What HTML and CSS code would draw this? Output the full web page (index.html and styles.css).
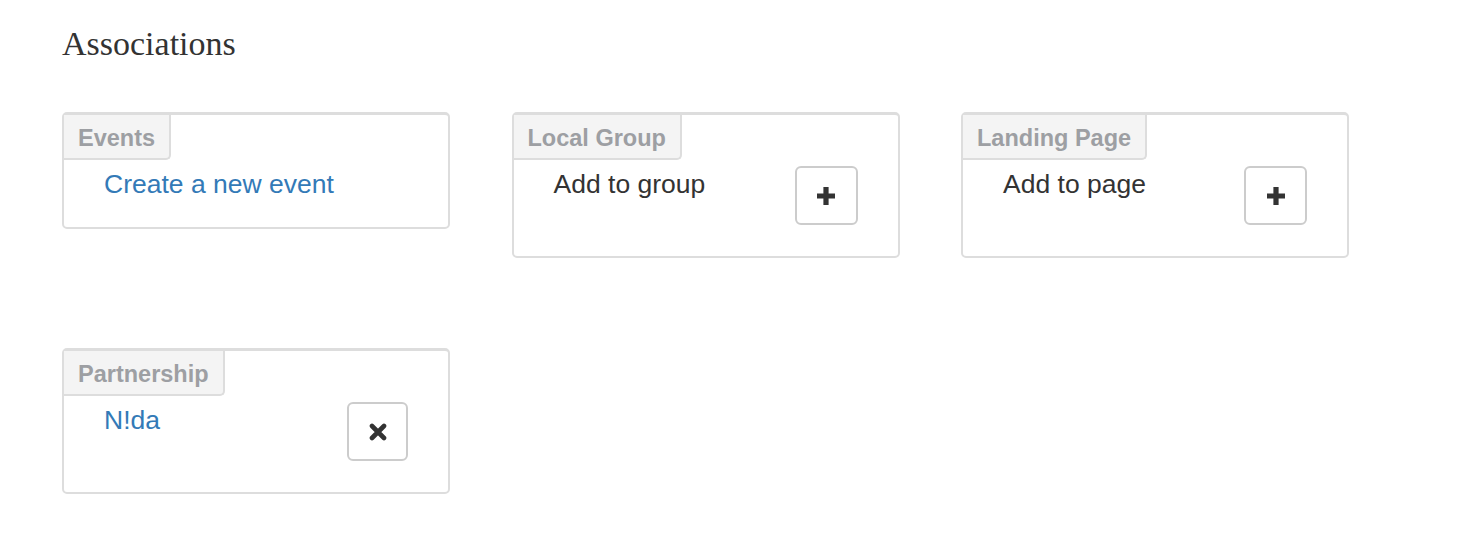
FILE: index.html
```html
<!DOCTYPE html>
<html>
<head>
<meta charset="utf-8">
<link rel="stylesheet" href="styles.css">
</head>
<body>
<div class="page">
  <h2 class="title">Associations</h2>
  <div class="grid">
    <div class="card">
      <div class="tab">Events</div>
      <div class="body">
        <a class="link" href="#">Create a new event</a>
      </div>
    </div>
    <div class="card">
      <div class="tab">Local Group</div>
      <div class="body">
        <span class="text">Add to group</span>
        <button class="btn" type="button" aria-label="Add">
          <svg width="20" height="20" viewBox="0 0 20 20"><path d="M10 1v18M1 10h18" stroke="#333" stroke-width="5.2" fill="none"/></svg>
        </button>
      </div>
    </div>
    <div class="card">
      <div class="tab">Landing Page</div>
      <div class="body">
        <span class="text">Add to page</span>
        <button class="btn" type="button" aria-label="Add">
          <svg width="20" height="20" viewBox="0 0 20 20"><path d="M10 1v18M1 10h18" stroke="#333" stroke-width="5.2" fill="none"/></svg>
        </button>
      </div>
    </div>
    <div class="card">
      <div class="tab">Partnership</div>
      <div class="body">
        <a class="link" href="#">N!da</a>
        <button class="btn btn-x" type="button" aria-label="Remove">
          <svg width="18" height="18" viewBox="0 0 18 18"><path d="M3 3l12 12M15 3L3 15" stroke="#333" stroke-width="4.6" stroke-linecap="round" fill="none"/></svg>
        </button>
      </div>
    </div>
  </div>
</div>
</body>
</html>
```

FILE: styles.css
```css
html, body {
  margin: 0;
  padding: 0;
  background: #fff;
}

.page {
  padding: 24px 0 0 62px;
  font-family: "Liberation Sans", Arial, Helvetica, sans-serif;
  color: #333;
}

.title {
  margin: 0 0 48px 0;
  font-family: "Liberation Serif", Georgia, serif;
  font-weight: normal;
  font-size: 34px;
  line-height: 40px;
  color: #333;
}

.grid {
  display: grid;
  grid-template-columns: repeat(3, 388px);
  column-gap: 61.5px;
  row-gap: 90px;
  align-items: start;
}

.card {
  border: 2px solid #ddd;
  border-top-width: 3px;
  border-radius: 5px;
  background: #fff;
}

.tab {
  display: inline-block;
  padding: 3px 14px 0 14px;
  line-height: 40px;
  font-size: 23.5px;
  font-weight: bold;
  color: #9d9fa3;
  background: #f4f4f4;
  border-right: 2px solid #ddd;
  border-bottom: 2px solid #ddd;
  border-bottom-right-radius: 5px;
  vertical-align: top;
}

.body {
  display: flex;
  justify-content: space-between;
  align-items: flex-start;
  padding: 5px 40px 24px 40px;
}

.text,
.link {
  font-size: 26.5px;
  line-height: 38px;
}

.text {
  color: #333;
}

.link {
  color: #337ab7;
  text-decoration: none;
}

.btn {
  display: flex;
  align-items: center;
  justify-content: center;
  width: 63px;
  height: 59px;
  margin: 1px 0 7px 0;
  padding: 0;
  background: #fff;
  border: 2px solid #ccc;
  border-radius: 6px;
}

.btn-x {
  width: 61px;
}
```
